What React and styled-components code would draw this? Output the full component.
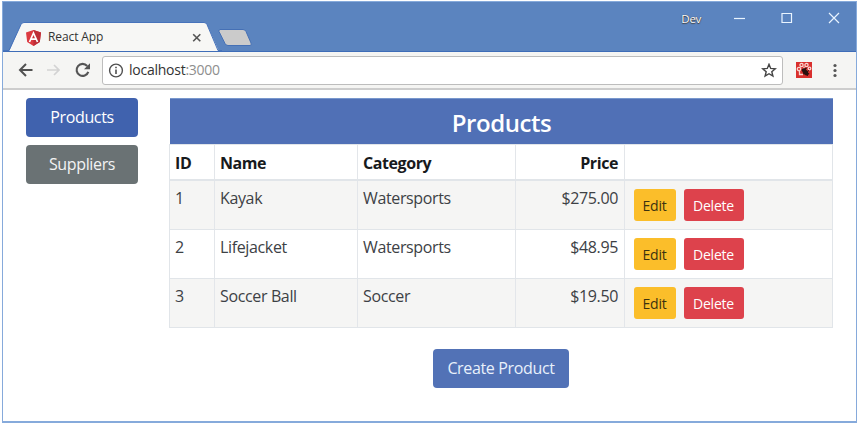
import React from "react";
import styled, { createGlobalStyle } from "styled-components";

const Global = createGlobalStyle`
  * { box-sizing: border-box; }
  body {
    margin: 0;
    background: #fff;
    font-family: "Open Sans", "Noto Sans", sans-serif;
    color: #3d4145;
  }
`;

const Page = styled.div`
  width: 859px;
  height: 424px;
  padding: 1px 2px 1px 2px;
  overflow: hidden;
`;

const Window = styled.div`
  height: 422px;
  display: flex;
  flex-direction: column;
  border: 1px solid #86aadb;
  border-bottom-width: 2px;
  background: #fff;
`;

const TitleBar = styled.header`
  height: 49px;
  flex: none;
  display: flex;
  justify-content: space-between;
  background: #5b84bf;
`;

const TabStrip = styled.div`
  display: flex;
`;

const Tab = styled.div`
  position: relative;
  width: 219px;
  height: 49px;
  display: flex;
  align-items: flex-start;
  padding: 27px 0 0 22px;
`;

const TabShape = styled.svg`
  position: absolute;
  left: 0;
  top: 0;
`;

const TabIcon = styled.svg`
  position: relative;
  flex: none;
`;

const TabTitle = styled.span`
  position: relative;
  margin-left: 6px;
  width: 144px;
  font-size: 12px;
  line-height: 16px;
  letter-spacing: -0.1px;
  color: #333;
`;

const TabClose = styled.svg`
  position: relative;
  flex: none;
  margin-top: 4px;
`;

const NewTab = styled.svg`
  flex: none;
  margin: 27px 0 0 -6px;
`;

const WindowControls = styled.div`
  display: flex;
  align-items: flex-start;
  color: #fff;
`;

const ProfileName = styled.span`
  margin: 9px 33px 0 0;
  font-size: 11.5px;
  line-height: 16px;
  letter-spacing: -0.3px;
  text-shadow: 0 0 1px #333, 0 1px 1px #444;
`;

const Controls = styled.svg`
  flex: none;
  margin: 10px 16px 0 0;
`;

const Toolbar = styled.nav`
  height: 39px;
  flex: none;
  display: flex;
  align-items: flex-start;
  background: #f5f5f3;
  border-top: 1px solid #3f6db8;
  border-bottom: 2px solid #cdcdcd;
  padding-top: 4px;
`;

const NavIcons = styled.svg`
  flex: none;
  margin: 4px 0 0 14px;
`;

const AddressBar = styled.div`
  width: 681px;
  height: 29px;
  margin-left: 8px;
  display: flex;
  align-items: center;
  background: #fff;
  border: 1px solid #bdbdbd;
  border-radius: 3px;
  padding: 0 5px 0 5px;
`;

const Url = styled.span`
  flex: 1;
  margin-left: 5px;
  font-size: 14px;
  line-height: 20px;
  letter-spacing: -0.25px;
  padding-bottom: 2px;
  color: #333;
`;

const Port = styled.span`
  color: #8e8e8e;
`;

const ToolbarIcons = styled.svg`
  flex: none;
  margin: 5px 0 0 12px;
`;

const Content = styled.main`
  flex: 1;
  display: flex;
  align-items: flex-start;
  padding: 7px 23px 0 23px;
`;

const Sidebar = styled.aside`
  width: 112px;
  margin-right: 31px;
  padding-top: 1px;
  display: flex;
  flex-direction: column;
  gap: 8px;
`;

const tones = {
  active: ["#4062ae", "#fff"],
  primary: ["#5272b6", "#e8f0fb"],
  secondary: ["#6a7274", "#f3f3f3"],
  warning: ["#fbbe2a", "#3b3210"],
  danger: ["#dd424c", "#fff"],
};

const Button = styled.button`
  display: block;
  border: 0;
  padding: 0;
  border-radius: 4px;
  height: 39px;
  width: ${(p) => p.$width}px;
  background: ${(p) => tones[p.$tone][0]};
  color: ${(p) => tones[p.$tone][1]};
  font-family: inherit;
  font-size: 16px;
  line-height: 39px;
  letter-spacing: -0.35px;
  white-space: nowrap;
`;

const SmallButton = styled(Button)`
  height: 32px;
  border-radius: 3px;
  font-size: 14px;
  line-height: 33px;
  letter-spacing: -0.2px;
`;

const Panel = styled.section`
  width: 664px;
  display: flex;
  flex-direction: column;
  align-items: center;
  padding-top: 1px;
`;

const PanelTitle = styled.h2`
  width: 663px;
  height: 46px;
  margin: 0 0 0 1px;
  background: #5070b6;
  border-top: 1px solid #7897cd;
  color: #fff;
  font-size: 24px;
  font-weight: 600;
  line-height: 48px;
  letter-spacing: -0.45px;
  text-align: center;
`;

const Table = styled.div`
  width: 664px;
  border: 1px solid #e1e5e9;
  margin-bottom: 21px;
`;

const Row = styled.div`
  display: grid;
  grid-template-columns: 45px 143px 158px 109px 207px;
  height: ${(p) => p.$height}px;
  background: ${(p) => (p.$striped ? "#f5f5f4" : "#fff")};
  border-bottom: ${(p) => p.$line || 0}px solid #e1e5e9;
`;

const Cell = styled.div`
  display: flex;
  gap: 8px;
  align-items: flex-start;
  justify-content: ${(p) => (p.$right ? "flex-end" : "flex-start")};
  padding: ${(p) => (p.$actions ? "8px 0 0 8.5px" : "5px 6px 0 5px")};
  border-right: 1px solid #e3e6ea;
  font-size: 16px;
  line-height: 24px;
  letter-spacing: -0.36px;
  white-space: nowrap;

  &:last-child {
    border-right: 0;
  }
`;

const HeadCell = styled(Cell)`
  padding: 6px 6px 0 5px;
  font-weight: 700;
  color: #171a1d;
  letter-spacing: -0.42px;
`;

const products = [
  { id: 1, name: "Kayak", category: "Watersports", price: "$275.00" },
  { id: 2, name: "Lifejacket", category: "Watersports", price: "$48.95" },
  { id: 3, name: "Soccer Ball", category: "Soccer", price: "$19.50" },
];

function BrowserTab() {
  return (
    <Tab>
      <TabShape width="219" height="49" viewBox="0 0 219 49">
        <path d="M0 49.5H6L18 22.5Q19 20.5 21 20.5H201Q203 20.5 204 22.5L216 49.5Z" fill="#f7f7f5" />
        <path d="M0 48.5H6L18 22.5Q19 20.5 21 20.5H201Q203 20.5 204 22.5L215 48.5H219" fill="none" stroke="#4773bb" />
      </TabShape>
      <TabIcon width="17" height="18" viewBox="0 0 17 18">
        <path d="M8.5 1 16 3.6 14.8 13 8.5 17 2.2 13 1 3.6Z" fill="#dc3a40" />
        <path d="M8.5 1 16 3.6 14.8 13 8.5 17Z" fill="#bd2e37" />
        <path d="M4.5 13 8.5 4 12.5 13M6.1 10.2H10.9" fill="none" stroke="#fff" strokeWidth="1.7" />
      </TabIcon>
      <TabTitle>React App</TabTitle>
      <TabClose width="10" height="10" viewBox="0 0 10 10">
        <path d="M1.2 1.2 8.3 8.3M8.3 1.2 1.2 8.3" stroke="#555" strokeWidth="1.6" />
      </TabClose>
    </Tab>
  );
}

function TitleControls() {
  return (
    <WindowControls>
      <ProfileName>Dev</ProfileName>
      <Controls width="106" height="14" viewBox="0 0 106 14" fill="none" stroke="#e9f4ff" strokeWidth="1.2">
        <path d="M0 6.5H11" />
        <path d="M48 1.5H57.5V10.5H48Z" />
        <path d="M95 1 105 11M105 1 95 11" />
      </Controls>
    </WindowControls>
  );
}

function BrowserToolbar() {
  return (
    <Toolbar>
      <NavIcons width="77" height="20" viewBox="0 0 77 20" fill="none" strokeWidth="2">
        <path d="M15.5 10H3M9 4 3 10 9 16" stroke="#515151" />
        <path d="M30 10H42M37 5 42 10 37 15" stroke="#d3d3d3" strokeWidth="1.7" />
        <path d="M70.2 6A6 6 0 1 0 71.3 11.8" stroke="#555" strokeWidth="2.1" />
        <path d="M73 3.2V9.2H67Z" fill="#555" />
      </NavIcons>
      <AddressBar>
        <svg width="16" height="16" viewBox="0 0 16 16">
          <circle cx="8" cy="7.5" r="6.4" fill="none" stroke="#505050" strokeWidth="1.4" />
          <path d="M8 6.5V11.1M8 3.7V5.3" stroke="#505050" strokeWidth="1.6" />
        </svg>
        <Url>
          localhost<Port>:3000</Port>
        </Url>
        <svg width="16" height="16" viewBox="0 0 16 16">
          <path
            d="M8 1.3 9.7 5.4 14.3 5.8 10.8 8.7 11.9 13.1 8 10.7 4.1 13.1 5.2 8.7 1.7 5.8 6.3 5.4Z"
            fill="none"
            stroke="#444"
            strokeWidth="1.4"
          />
        </svg>
      </AddressBar>
      <ToolbarIcons width="46" height="18" viewBox="0 0 46 18">
        <rect x="1" y="1" width="16" height="16" fill="#d92f2d" />
        <g fill="none" stroke="#f8d4ce" strokeWidth="1.3">
          <circle cx="6.5" cy="4" r="1.6" />
          <circle cx="11.5" cy="4" r="1.6" />
          <circle cx="4" cy="8" r="1.7" />
          <circle cx="14.5" cy="7.5" r="1.3" />
          <path d="M4.5 10V13.5H8M9 5.5V8" />
        </g>
        <ellipse cx="10.2" cy="11" rx="2.3" ry="4" transform="rotate(-38 10 11)" fill="#29100f" />
        <path d="M6.5 9 12 7M8 13 14 9.5M12 15 14 12" stroke="#29100f" />
        <g fill="#555">
          <circle cx="40" cy="4.5" r="1.6" />
          <circle cx="40" cy="9.5" r="1.6" />
          <circle cx="40" cy="14.5" r="1.6" />
        </g>
      </ToolbarIcons>
    </Toolbar>
  );
}

function ProductTable() {
  return (
    <Table>
      <Row $height={36} $line={2}>
        <HeadCell>ID</HeadCell>
        <HeadCell>Name</HeadCell>
        <HeadCell>Category</HeadCell>
        <HeadCell $right>Price</HeadCell>
        <HeadCell />
      </Row>
      {products.map((p, i) => (
        <Row key={p.id} $height={i < 2 ? 49 : 48} $line={i < 2 ? 1 : 0} $striped={i % 2 === 0}>
          <Cell>{p.id}</Cell>
          <Cell>{p.name}</Cell>
          <Cell>{p.category}</Cell>
          <Cell $right>{p.price}</Cell>
          <Cell $actions>
            <SmallButton $tone="warning" $width={42}>Edit</SmallButton>
            <SmallButton $tone="danger" $width={60}>Delete</SmallButton>
          </Cell>
        </Row>
      ))}
    </Table>
  );
}

export default function App() {
  return (
    <Page>
      <Global />
      <Window>
        <TitleBar>
          <TabStrip>
            <BrowserTab />
            <NewTab width="38" height="20" viewBox="0 0 38 20">
              <path d="M4 0.5H27Q29 0.5 30 2.5L35 14Q36 16.5 34 16.5H12Q10 16.5 9 14.5L3 2.5Q2.5 0.5 4 0.5Z" fill="#cbcbcb" stroke="#4570b5" />
            </NewTab>
          </TabStrip>
          <TitleControls />
        </TitleBar>
        <BrowserToolbar />
        <Content>
          <Sidebar>
            <Button $tone="active" $width={112}>Products</Button>
            <Button $tone="secondary" $width={112}>Suppliers</Button>
          </Sidebar>
          <Panel>
            <PanelTitle>Products</PanelTitle>
            <ProductTable />
            <Button $tone="primary" $width={136}>Create Product</Button>
          </Panel>
        </Content>
      </Window>
    </Page>
  );
}
